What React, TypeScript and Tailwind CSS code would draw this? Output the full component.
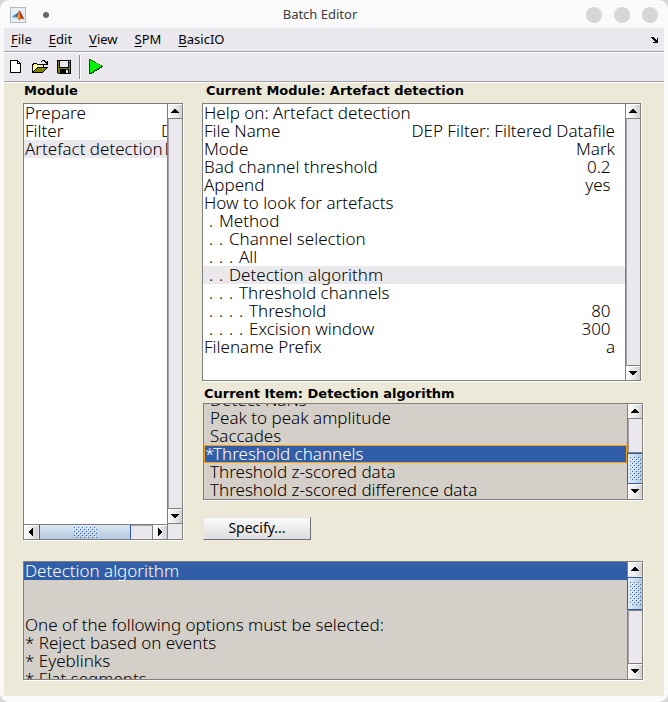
import type { ReactNode } from 'react';

type Row = { name: string; value?: string; depth?: number; selected?: boolean };

const modules: Row[] = [
  { name: 'Prepare' },
  { name: 'Filter', value: 'DEP' },
  { name: 'Artefact detection', value: 'DEP', selected: true },
];

const settings: Row[] = [
  { name: 'Help on: Artefact detection' },
  { name: 'File Name', value: 'DEP Filter: Filtered Datafile' },
  { name: 'Mode', value: 'Mark' },
  { name: 'Bad channel threshold', value: '0.2 ' },
  { name: 'Append', value: 'yes ' },
  { name: 'How to look for artefacts' },
  { name: 'Method', depth: 1 },
  { name: 'Channel selection', depth: 2 },
  { name: 'All', depth: 3 },
  { name: 'Detection algorithm', depth: 2, selected: true },
  { name: 'Threshold channels', depth: 3 },
  { name: 'Threshold', depth: 4, value: '80 ' },
  { name: 'Excision window', depth: 4, value: '300 ' },
  { name: 'Filename Prefix', value: 'a' },
];

const choices: Row[] = [
  { name: 'Detect NaNs' },
  { name: 'Peak to peak amplitude' },
  { name: 'Saccades' },
  { name: 'Threshold channels', selected: true },
  { name: 'Threshold z-scored data' },
  { name: 'Threshold z-scored difference data' },
];

const help = [
  'Detection algorithm',
  '',
  '',
  'One of the following options must be selected:',
  '* Reject based on events',
  '* Eyeblinks',
  '* Flat segments',
];

const menus = ['File', 'Edit', 'View', 'SPM', 'BasicIO'];

const listText = "font-['Noto_Sans',sans-serif] font-light text-[17px] leading-[18px] whitespace-pre text-black";
const frame = 'flex border border-[#808080] shadow-[1px_1px_0_#ffffff] overflow-hidden';
const heading = "font-['DejaVu_Sans',sans-serif] text-[13px] leading-[16px] font-bold text-black";

const arrows = {
  up: 'M6 5h2v1h1v1h1v1h1v1H3V8h1V7h1V6h1z',
  down: 'M3 5h8v1h-1v1H9v1H8v1H6V8H5V7H4V6H3z',
  left: 'M9 3v8H8v-1H7V9H6V8H5V6h1V5h1V4h1V3z',
  right: 'M5 3v8h1v-1h1V9h1V8h1V6H8V5H7V4H6V3z',
};

function Arrow({ dir }: { dir: keyof typeof arrows }) {
  return (
    <button
      type="button"
      aria-label={`Scroll ${dir}`}
      className="size-[14px] shrink-0 bg-linear-to-r from-[#fdfdfd] via-[#ececee] to-[#d0cfd4]"
    >
      <svg className="size-[14px]" viewBox="0 0 14 14" shapeRendering="crispEdges" aria-hidden="true">
        <path d="M0 0h14v1H1v13H0z" fill="#fff" />
        <path d={arrows[dir]} />
      </svg>
    </button>
  );
}

function Grip({ id, className }: { id: string; className: string }) {
  return (
    <svg className={className} shapeRendering="crispEdges" aria-hidden="true">
      <defs>
        <pattern id={id} width="4" height="4" patternUnits="userSpaceOnUse">
          <rect width="1" height="1" fill="#3a62ac" />
          <rect x="2" y="2" width="1" height="1" fill="#3a62ac" />
          <rect x="1" y="1" width="1" height="1" fill="#f4f8fd" />
          <rect x="3" y="3" width="1" height="1" fill="#f4f8fd" />
        </pattern>
      </defs>
      <rect width="100%" height="100%" fill={`url(#${id})`} />
    </svg>
  );
}

function VerticalBar({ children, className = '' }: { children: ReactNode; className?: string }) {
  return (
    <div className={`flex w-[15px] shrink-0 flex-col border-l border-[#808080] bg-[#ebe8ed] ${className}`}>
      <Arrow dir="up" />
      {children}
      <Arrow dir="down" />
    </div>
  );
}

function Track() {
  return <div className="flex-1 border-y border-l border-y-[#808080] border-l-[#a5a3a8]" />;
}

function Thumb({ id, className }: { id: string; className: string }) {
  return (
    <div
      className={`-ml-px flex shrink-0 items-center justify-center border-y border-l border-[#325ea8] bg-linear-to-r from-[#e4eef8] to-[#b3c8df] ${className}`}
    >
      <Grip id={id} className="h-[23px] w-[11px]" />
    </div>
  );
}

function MatlabIcon() {
  return (
    <svg className="size-4" viewBox="0 0 16 16" aria-hidden="true">
      <rect x="0.5" y="0.5" width="15" height="15" fill="#e6edf5" stroke="#b4bac3" />
      <path d="M1.6 9.2L5 7.6l2 2-2.4 1.6z" fill="#5fa3d3" />
      <path d="M5 7.6c2 0 2.6-2 4-3.8L7.4 9.2 6 10z" fill="#2b5f93" />
      <path d="M9 3.4c1.4 0 2.6 4.6 5.4 8.8-2-1.2-3.2-.8-5.2 1.4-.8-1.6-1.4-2.6-3-2.6C8 9 8 5.400 9 3.400z" fill="#e4702a" />
      <path d="M9.400 3.600c1.200.4 2.400 4.800 5 8.600-1.400-.8-2.200-1-3-.6-1-2-1.600-5-2-8z" fill="#a8331c" />
      <path d="M9 4.600c0 3-.6 5-2 6.200l1.600 1.400c1-2 1-5 .4-7.600z" fill="#f3a13a" />
    </svg>
  );
}

function NewIcon() {
  return (
    <svg className="h-[14px] w-[12px]" viewBox="0 0 12 14" shapeRendering="crispEdges" aria-hidden="true">
      <path d="M0 0h8v1h1v1h1v1h1v10H0z" />
      <path d="M1 1h6v3h3v8H1z" fill="#fff" />
      <path d="M8 2h1v1H8z" fill="#fff" />
    </svg>
  );
}

function OpenIcon() {
  return (
    <svg className="h-[14px] w-[17px]" viewBox="0 0 17 14" shapeRendering="crispEdges" aria-hidden="true">
      <path d="M9 1h1V0h3v1h1v1h1V1h1v4h-4V4h2V3h-1V2h-1V1h-2v1H9z" />
      <path d="M0 4h1V3h4v1h7v3h4v1h-1v1h-1v1h-1v1h-1v1h-1v1H0z" />
      <path d="M1 5h1V4h3v1h6v2H5v1H4v1H3v1H2v1H1z" fill="#ffff8c" />
      <path d="M5 8h9v1h-1v1h-1v1h-1v1H2v-1h1v-1h1V9h1z" fill="#808000" />
    </svg>
  );
}

function SaveIcon() {
  return (
    <svg className="size-[14px]" viewBox="0 0 14 14" shapeRendering="crispEdges" aria-hidden="true">
      <path d="M0 0h14v14H1v-1H0z" />
      <path d="M1 1h1v7h10V3h1v10h-1V9H3v4H1z" fill="#808000" />
      <path d="M3 1h8v6H3zM12 1h1v1h-1zM9 10h2v3H9z" fill="#ebe8ed" />
    </svg>
  );
}

function RunIcon() {
  return (
    <svg className="h-[16px] w-[15px]" viewBox="0 0 15 16" shapeRendering="crispEdges" aria-hidden="true">
      <path d="M0 0h1l13 7v1L2 15H0z" fill="#064d06" />
      <path d="M1 1l12 6-12 7z" fill="#00f300" />
    </svg>
  );
}

function Dots({ depth }: { depth: number }) {
  return (
    <span className="inline-flex pl-[5px]">
      {Array.from({ length: depth }, (_, i) => (
        <span key={i} className="w-[10px]">.</span>
      ))}
    </span>
  );
}

export default function App() {
  return (
    <div className="bg-[#d6d6d6]">
      <main className="flex min-h-screen flex-col rounded-[9px] bg-[#fafafa] px-1 pb-[6px]">
        <header className="grid h-7 shrink-0 grid-cols-[1fr_auto_1fr] items-center">
          <div className="flex items-center gap-[17px] pt-[2px] pl-[6px]">
            <MatlabIcon />
            <span className="size-[6px] rounded-full bg-[#686868]" />
          </div>
          <h1 className="pr-7 font-['Noto_Sans',sans-serif] text-[13px] leading-[18px] text-[#3c3c3c]">Batch Editor</h1>
          <div className="flex justify-end gap-3 pt-[2px] pr-[6px]">
            <button type="button" aria-label="Minimize" className="size-4 rounded-full bg-[#d6d6d6]" />
            <button type="button" aria-label="Maximize" className="size-4 rounded-full bg-[#d6d6d6]" />
            <button type="button" aria-label="Close" className="size-4 rounded-full bg-[#d6d6d6]" />
          </div>
        </header>

        <nav className="flex h-6 shrink-0 items-center border-b border-[#a3a1a6] bg-[#ebe8ed] pr-[6px] pl-[7px]">
          <div className="flex flex-1 gap-[17px] pb-[2px] font-['Noto_Sans',sans-serif] text-[13px] leading-4 text-black">
            {menus.map((m) => (
              <button key={m} type="button">
                <span className="underline underline-offset-2">{m[0]}</span>
                {m.slice(1)}
              </button>
            ))}
          </div>
          <button type="button" aria-label="Dock window">
            <svg className="h-[6px] w-[7px]" viewBox="0 0 7 6" shapeRendering="crispEdges" aria-hidden="true">
              <path d="M0 0h3v1h1v1h1v1h1V1h1v5H2V5h2V4H3V3H2V2H1V1H0z" />
            </svg>
          </button>
        </nav>

        <div className="flex h-[30px] shrink-0 items-center border-t border-b border-t-white border-b-[#a3a1a6] bg-[#ebe8ed] pl-[6px]">
          <button type="button" aria-label="New" className="mr-[10px]">
            <NewIcon />
          </button>
          <button type="button" aria-label="Open" className="mr-2">
            <OpenIcon />
          </button>
          <button type="button" aria-label="Save" className="mr-2">
            <SaveIcon />
          </button>
          <span className="mr-2 h-6 w-[2px] border-r border-l border-r-white border-l-[#8c8a90]" />
          <button type="button" aria-label="Run">
            <RunIcon />
          </button>
        </div>

        <div className="flex-1 border-t border-white bg-[#ece9d8] pr-[21px] pb-4 pl-[19px]">
          <div className="grid grid-cols-[160px_1fr] gap-x-[19px]">
            <section className="flex flex-col">
              <h2 id="modules" className={`${heading} mb-[4px] pl-px`}>Module</h2>
              <div className={`${frame} flex-1 bg-white`}>
                <div className="flex min-w-0 flex-1 flex-col">
                  <ul role="listbox" aria-labelledby="modules" className={`${listText} flex-1 overflow-hidden`}>
                    {modules.map((r) => (
                      <li
                        key={r.name}
                        role="option"
                        aria-selected={!!r.selected}
                        className={`flex gap-[2px] pl-px ${r.selected ? 'bg-[#ebe8ed]' : ''}`}
                      >
                        <span className="min-w-[134px] shrink-0">{r.name}</span>
                        <span>{r.value}</span>
                      </li>
                    ))}
                  </ul>
                  <div className="flex h-[15px] shrink-0 border-t border-[#808080] bg-[#ebe8ed]">
                    <Arrow dir="left" />
                    <div className="ml-px flex w-[92px] items-center justify-center border-r border-l border-[#325ea8] bg-linear-to-b from-[#dbe7f3] to-[#b3c8df]">
                      <Grip id="grip-h" className="h-[11px] w-[23px]" />
                    </div>
                    <div className="flex-1 border-t border-r border-t-[#a5a3a8] border-r-[#808080]" />
                    <Arrow dir="right" />
                  </div>
                </div>
                <div className="flex flex-col bg-[#ebe8ed]">
                  <div className="flex flex-1">
                    <VerticalBar>
                      <Track />
                    </VerticalBar>
                  </div>
                  <div className="h-4 border-t border-l border-[#808080]" />
                </div>
              </div>
            </section>

            <div className="flex flex-col">
              <section className="mr-[2px]">
                <h2 id="settings" className={`${heading} mb-[4px] pl-1`}>Current Module: Artefact detection</h2>
                <div className={`${frame} h-[278px] bg-white`}>
                  <ul role="listbox" aria-labelledby="settings" className={`${listText} min-w-0 flex-1`}>
                    {settings.map((r) => (
                      <li
                        key={r.name}
                        role="option"
                        aria-selected={!!r.selected}
                        className={`flex justify-between pr-[10px] pl-px ${r.selected ? 'bg-[#ebe8ed]' : ''}`}
                      >
                        <span>
                          {r.depth ? <Dots depth={r.depth} /> : null}
                          {r.name}
                        </span>
                        <span>{r.value}</span>
                      </li>
                    ))}
                  </ul>
                  <VerticalBar>
                    <Track />
                  </VerticalBar>
                </div>
              </section>

              <section className="mt-[5px] ml-px">
                <h2 id="choices" className={`${heading} mb-px pl-px`}>Current Item: Detection algorithm</h2>
                <div className={`${frame} h-[97px] bg-[#d4cfc8]`}>
                  <ul
                    role="listbox"
                    aria-labelledby="choices"
                    className={`${listText} flex min-w-0 flex-1 flex-col justify-end`}
                  >
                    {choices.map((r) => (
                      <li
                        key={r.name}
                        role="option"
                        aria-selected={!!r.selected}
                        className={`flex shrink-0 pl-px ${r.selected ? 'bg-[#325ea8] text-white outline-1 -outline-offset-1 outline-[#f0a010]' : ''}`}
                      >
                        <span className={r.selected ? 'w-2' : 'w-[5px]'}>{r.selected ? '*' : ''}</span>
                        {r.name}
                      </li>
                    ))}
                  </ul>
                  <VerticalBar className="pb-px">
                    <Track />
                    <Thumb id="grip-c" className="h-[31px]" />
                  </VerticalBar>
                </div>
              </section>

              <button
                type="button"
                className="mt-[17px] ml-px h-[23px] w-[108px] border border-t-[#dfe3ea] border-r-[#6c7079] border-b-[#6c7079] border-l-[#dfe3ea] bg-linear-to-b from-[#fafafa] to-[#dedee0] pb-px font-['Noto_Sans',sans-serif] text-[14px] leading-4 text-black"
              >
                Specify...
              </button>
            </div>
          </div>

          <div className={`${frame} mt-[21px] h-[119px] bg-[#d4cfc8]`}>
            <ul role="listbox" aria-label="Help" className={`${listText} min-w-0 flex-1`}>
              {help.map((line, i) => (
                <li
                  key={i}
                  role="option"
                  aria-selected={i === 0}
                  className={`h-[18px] pl-px ${i === 0 ? 'bg-[#325ea8] text-white' : ''}`}
                >
                  {line}
                </li>
              ))}
            </ul>
            <VerticalBar className="pb-px">
              <Thumb id="grip-d" className="mt-px h-[33px]" />
              <Track />
            </VerticalBar>
          </div>
        </div>
      </main>
    </div>
  );
}
